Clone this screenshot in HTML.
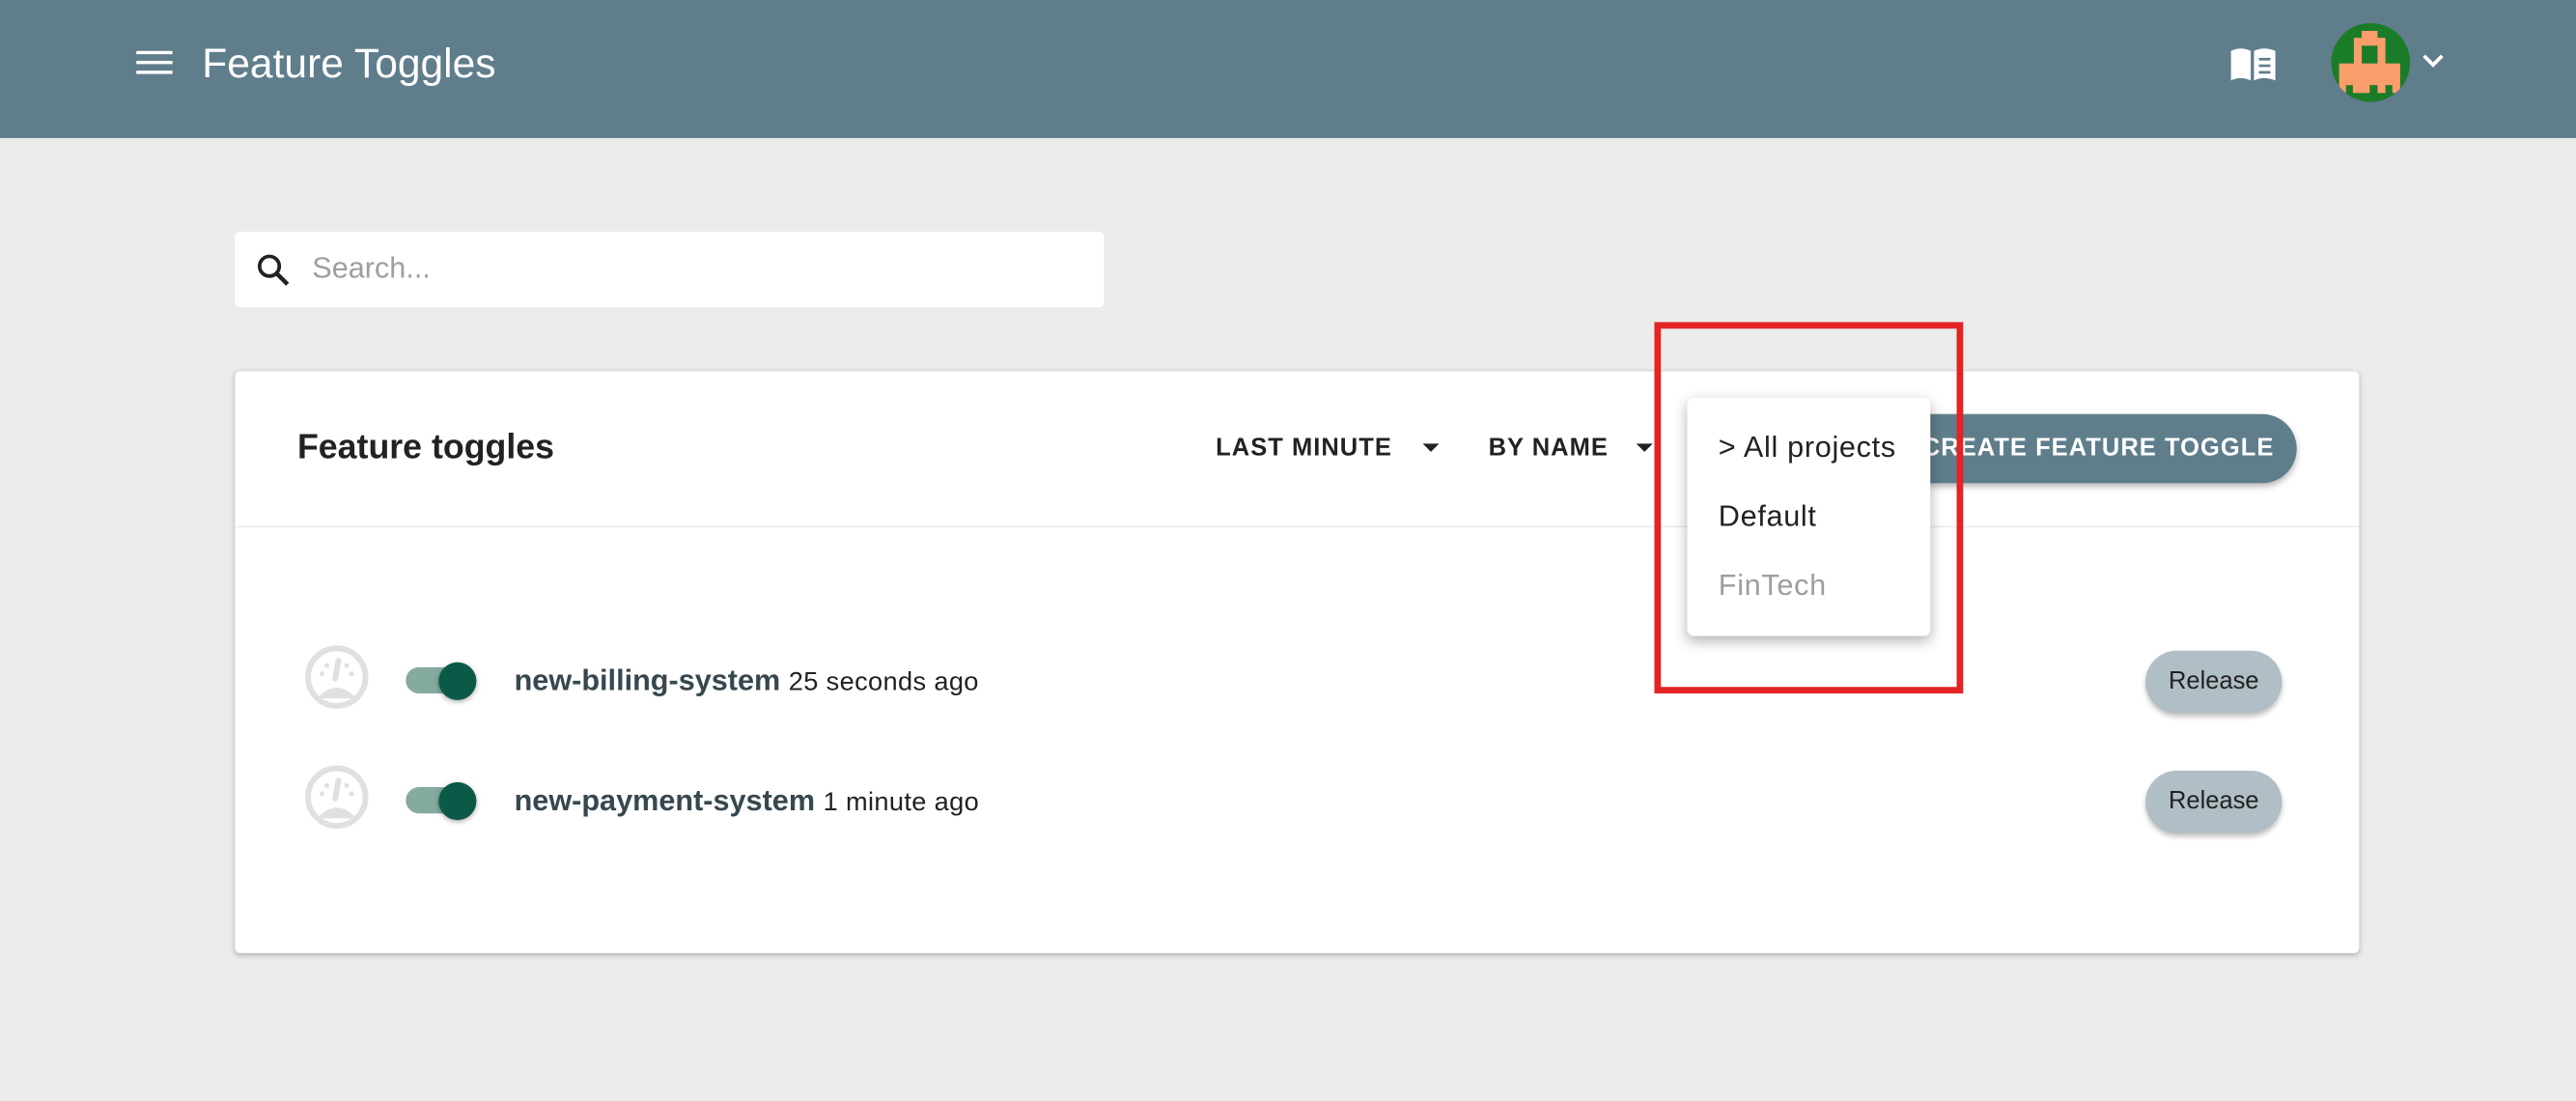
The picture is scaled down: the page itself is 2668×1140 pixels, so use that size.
<!DOCTYPE html>
<html><head><meta charset="utf-8"><style>
html,body{margin:0;padding:0;width:2668px;height:1140px;overflow:hidden;background:#ebebeb}
#w{position:absolute;left:0;top:0;width:1568px;height:670px;transform:scale(1.70153);transform-origin:0 0;font-family:"Liberation Sans",sans-serif;background:#ebebeb}
.a{position:absolute}
.hdr{left:0;top:0;width:1568px;height:84px;background:#607d8b}
.card{left:143px;top:226px;width:1293px;height:354px;background:#fff;border-radius:3px;box-shadow:0 1px 3px rgba(0,0,0,.25)}
.caps{font-size:15px;font-weight:bold;letter-spacing:.6px;color:#222}
.tri{width:0;height:0;border-left:5px solid transparent;border-right:5px solid transparent;border-top:5px solid #222}
.rel{width:83px;height:38px;border-radius:19px;background:#b0bec5;box-shadow:0 2px 3px rgba(0,0,0,.25);font-size:15px;color:#222;text-align:center;line-height:38px}
.name{font-size:18px;font-weight:bold;color:#37474f}
.ts{font-size:16px;font-weight:normal;color:#222;letter-spacing:.2px}
.mi{font-size:18px;letter-spacing:.4px}
</style></head><body><div id="w">
<div class="a hdr"></div>
<div class="a" style="left:83px;top:31px;width:22px;height:2px;background:#fff;box-shadow:0 6px 0 #fff,0 12px 0 #fff"></div>
<div class="a" style="left:123px;top:25px;font-size:25px;color:#fff">Feature Toggles</div>
<svg class="a" style="left:1357px;top:28px" width="29" height="22" viewBox="0 0 29 22"><path d="M1 3 Q7 0 13 3 V21 Q7 18 1 21Z" fill="#fff"/><path d="M15 3 Q21 0 28 3 V21 Q21 18 15 21Z" fill="#fff"/><path d="M18 8 H25 M18 12 H25 M18 16 H25" stroke="#607d8b" stroke-width="1.6"/></svg>
<svg class="a" style="left:1419px;top:14px" width="48" height="48" viewBox="0 0 80 80"><defs><clipPath id="c"><circle cx="40" cy="40" r="40"/></clipPath></defs><g clip-path="url(#c)"><rect width="80" height="80" fill="#1a7c28"/><rect x="31" y="8" width="16" height="8" fill="#f99d6b"/><rect x="23" y="15" width="32" height="27" fill="#f99d6b"/><rect x="31" y="23" width="16" height="19" fill="#1a7c28"/><rect x="8" y="41" width="62" height="30" fill="#f99d6b"/><rect x="15" y="63" width="7" height="10" fill="#1a7c28"/><rect x="39" y="63" width="8" height="10" fill="#1a7c28"/><rect x="55" y="63" width="7" height="10" fill="#1a7c28"/></g></svg>
<svg class="a" style="left:1474px;top:32px" width="14" height="10"><path d="M1.5 2 L7 7.5 L12.5 2" stroke="#fff" stroke-width="2.2" fill="none"/></svg>

<div class="a" style="left:143px;top:141px;width:529px;height:46px;background:#fff;border-radius:3px"></div>
<svg class="a" style="left:155px;top:153px" width="24" height="24" viewBox="0 0 24 24"><circle cx="9" cy="9" r="6" stroke="#222" stroke-width="2.2" fill="none"/><path d="M13.5 13.5 L20 20" stroke="#222" stroke-width="2.6"/></svg>
<div class="a" style="left:190px;top:153px;font-size:18px;color:#9e9e9e">Search...</div>

<div class="a card"></div>
<div class="a" style="left:143px;top:320px;width:1293px;height:1px;background:#ececec"></div>
<div class="a" style="left:181px;top:261px;font-size:21px;font-weight:bold;color:#222">Feature toggles</div>
<div class="a caps" style="left:740px;top:264px">LAST MINUTE</div><div class="a tri" style="left:866px;top:270px"></div>
<div class="a caps" style="left:906px;top:264px">BY NAME</div><div class="a tri" style="left:996px;top:270px"></div>
<div class="a" style="left:1120px;top:252px;width:278px;height:42px;border-radius:21px;background:#607d8b;box-shadow:0 2px 4px rgba(0,0,0,.3)"></div>
<div class="a caps" style="left:1170px;top:264px;color:#fff">CREATE FEATURE TOGGLE</div>

<div class="a" style="left:1027px;top:242px;width:148px;height:145px;background:#fff;border-radius:4px;box-shadow:0 3px 8px rgba(0,0,0,.3)"></div>
<div class="a mi" style="left:1046px;top:262px;color:#222">&gt; All projects</div>
<div class="a mi" style="left:1046px;top:304px;color:#222">Default</div>
<div class="a mi" style="left:1046px;top:346px;color:#9e9e9e">FinTech</div>
<div class="a" style="left:1007px;top:196px;width:180px;height:218px;border:4.5px solid #e32424"></div>

<svg class="a" style="left:185px;top:392px" width="40" height="40" viewBox="0 0 40 40"><circle cx="20" cy="20" r="17.5" fill="none" stroke="#e0e0e0" stroke-width="3.5"/><path d="M8 33 Q20 20 32 33Z" fill="#e0e0e0"/><path d="M21 10 L19 21" stroke="#e0e0e0" stroke-width="3.5" stroke-linecap="round"/><circle cx="14" cy="13" r="1.5" fill="#e0e0e0"/><circle cx="11" cy="18" r="1.5" fill="#e0e0e0"/><circle cx="26" cy="13" r="1.5" fill="#e0e0e0"/><circle cx="29" cy="18" r="1.5" fill="#e0e0e0"/></svg>
<div class="a" style="left:247px;top:406px;width:40px;height:16px;border-radius:8px;background:#85aaa0"></div>
<div class="a" style="left:267px;top:403px;width:23px;height:23px;border-radius:50%;background:#0b5a48;box-shadow:0 1px 3px rgba(0,0,0,.35)"></div>
<div class="a name" style="left:313px;top:404px">new-billing-system <span class="ts">25 seconds ago</span></div>
<div class="a rel" style="left:1306px;top:396px">Release</div>

<svg class="a" style="left:185px;top:465px" width="40" height="40" viewBox="0 0 40 40"><circle cx="20" cy="20" r="17.5" fill="none" stroke="#e0e0e0" stroke-width="3.5"/><path d="M8 33 Q20 20 32 33Z" fill="#e0e0e0"/><path d="M21 10 L19 21" stroke="#e0e0e0" stroke-width="3.5" stroke-linecap="round"/><circle cx="14" cy="13" r="1.5" fill="#e0e0e0"/><circle cx="11" cy="18" r="1.5" fill="#e0e0e0"/><circle cx="26" cy="13" r="1.5" fill="#e0e0e0"/><circle cx="29" cy="18" r="1.5" fill="#e0e0e0"/></svg>
<div class="a" style="left:247px;top:479px;width:40px;height:16px;border-radius:8px;background:#85aaa0"></div>
<div class="a" style="left:267px;top:476px;width:23px;height:23px;border-radius:50%;background:#0b5a48;box-shadow:0 1px 3px rgba(0,0,0,.35)"></div>
<div class="a name" style="left:313px;top:477px">new-payment-system <span class="ts">1 minute ago</span></div>
<div class="a rel" style="left:1306px;top:469px">Release</div>
</div></body></html>
